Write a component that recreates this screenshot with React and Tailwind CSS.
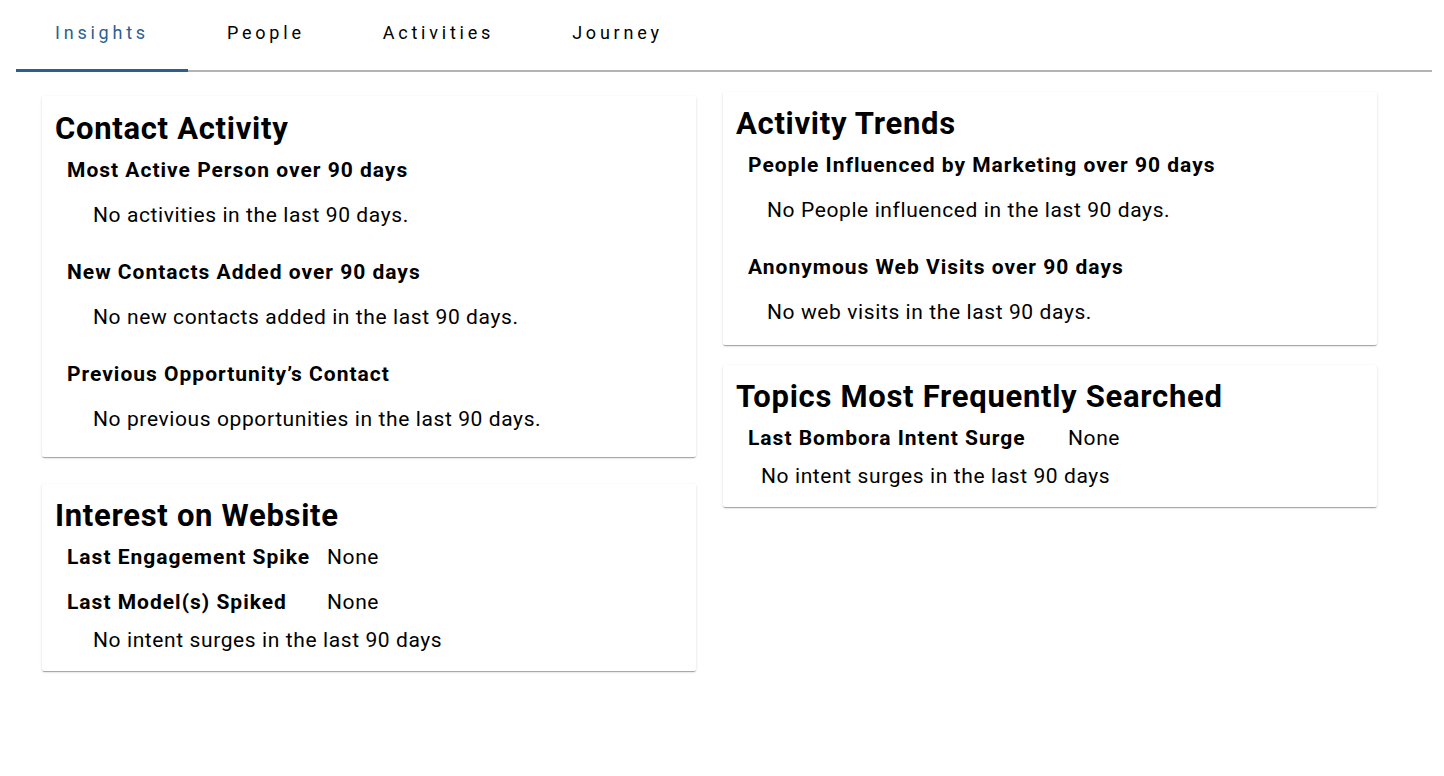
import React from "react";

const font = { fontFamily: "Roboto, 'Noto Sans', sans-serif" };

function Card({ title, children, className = "" }) {
  return (
    <div
      className={
        "bg-white rounded-[2px] shadow-[0_2px_1px_-1px_rgba(0,0,0,0.2),0_1px_1px_0_rgba(0,0,0,0.14),0_1px_3px_0_rgba(0,0,0,0.12)] pl-[13px] pr-4 " +
        className
      }
    >
      <h2 className="text-[31px] font-bold leading-[36px] tracking-[0.7px] text-black">{title}</h2>
      {children}
    </div>
  );
}

function Section({ title, text, bodyPad = "pl-[38px]" }) {
  return (
    <div>
      <h3 className="pl-3 text-[21px] font-bold leading-[28px] tracking-[1px] text-black">{title}</h3>
      <p className={bodyPad + " mt-[17px] text-[21px] leading-[28px] tracking-[0.6px] text-black"}>{text}</p>
    </div>
  );
}

export default function App() {
  const tabs = ["Insights", "People", "Activities", "Journey"];
  return (
    <div className="min-h-screen bg-white" style={font}>
      <div className="pl-4 pr-3">
        <div className="flex border-b-2 border-[#b3b3b3]">
          {tabs.map((t, i) => (
            <div
              key={t}
              className={
                "px-[39px] pt-[20px] text-[18px] leading-[26px] tracking-[0.21em] -mb-[2px] " +
                (i === 0
                  ? "text-[#2b5f93] border-b-[3px] border-[#2b5f93] pb-[23px]"
                  : "text-black border-b-2 border-transparent pb-[24px]")
              }
            >
              {t}
            </div>
          ))}
        </div>
      </div>
      <div className="pl-[42px] pr-[67px] grid grid-cols-2 gap-[27px] items-start">
        <div className="flex flex-col gap-[27px] pt-[24px]">
          <Card title="Contact Activity" className="pt-[15px] pb-[24px]">
            <div className="flex flex-col gap-[29px] mt-[9px]">
              <Section title="Most Active Person over 90 days" text="No activities in the last 90 days." />
              <Section title="New Contacts Added over 90 days" text="No new contacts added in the last 90 days." />
              <Section title="Previous Opportunity’s Contact" text="No previous opportunities in the last 90 days." />
            </div>
          </Card>
          <Card title="Interest on Website" className="pt-[14px] pb-[17px]">
            <div className="mt-[9px] pl-3 text-[21px] leading-[28px] text-black">
              <div className="flex">
                <span className="w-[260px] font-bold tracking-[1px]">Last Engagement Spike</span>
                <span className="tracking-[0.6px]">None</span>
              </div>
              <div className="flex mt-[17px]">
                <span className="w-[260px] font-bold tracking-[1px]">Last Model(s) Spiked</span>
                <span className="tracking-[0.6px]">None</span>
              </div>
              <p className="pl-[26px] mt-[10px] tracking-[0.6px]">No intent surges in the last 90 days</p>
            </div>
          </Card>
        </div>
        <div className="flex flex-col gap-[20px] pt-[20px]">
          <Card title="Activity Trends" className="pt-[14px] pb-[19px]">
            <div className="flex flex-col gap-[29px] mt-[9px]">
              <Section title="People Influenced by Marketing over 90 days" text="No People influenced in the last 90 days." bodyPad="pl-[31px]" />
              <Section title="Anonymous Web Visits over 90 days" text="No web visits in the last 90 days." bodyPad="pl-[31px]" />
            </div>
          </Card>
          <Card title="Topics Most Frequently Searched" className="pt-[14px] pb-[17px]">
            <div className="mt-[9px] pl-3 text-[21px] leading-[28px] text-black">
              <div className="flex">
                <span className="w-[320px] font-bold tracking-[1px]">Last Bombora Intent Surge</span>
                <span className="tracking-[0.6px]">None</span>
              </div>
              <p className="pl-[13px] mt-[10px] tracking-[0.6px]">No intent surges in the last 90 days</p>
            </div>
          </Card>
        </div>
      </div>
    </div>
  );
}
